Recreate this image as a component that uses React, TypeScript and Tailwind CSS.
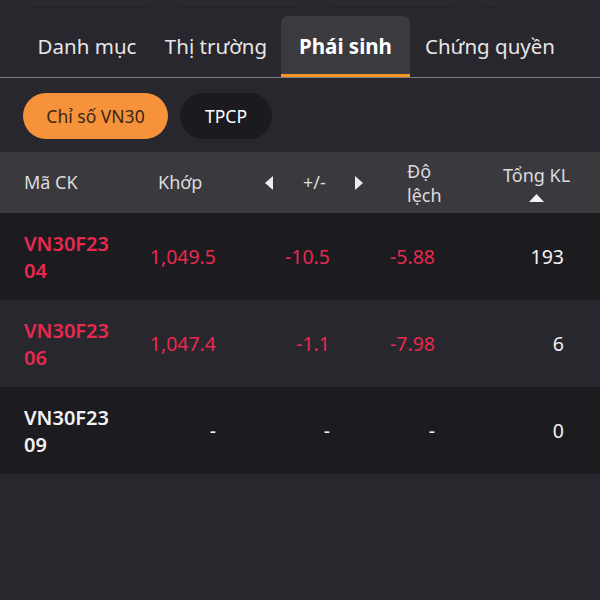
import React from "react";

const RED = "text-[#e8294f]";

type Row = { sym: [string, string]; price: string; chg: string; pct: string; vol: string; red: boolean; dark: boolean };

const rows: Row[] = [
  { sym: ["VN30F23", "04"], price: "1,049.5", chg: "-10.5", pct: "-5.88", vol: "193", red: true, dark: true },
  { sym: ["VN30F23", "06"], price: "1,047.4", chg: "-1.1", pct: "-7.98", vol: "6", red: true, dark: false },
  { sym: ["VN30F23", "09"], price: "-", chg: "-", pct: "-", vol: "0", red: false, dark: true },
];

export default function App() {
  return (
    <div
      className="w-[600px] h-[600px] bg-[#28272d] overflow-hidden text-white"
      style={{ fontFamily: '"Noto Sans", "Open Sans", sans-serif' }}
    >
      {/* top cropped strip */}
      <div className="h-[5px] flex pl-[27px] gap-[25px]">
        <div className="w-[125px] h-[4px] rounded-b-[6px] bg-[#2a2930] border-b border-[#302f35]" />
        <div className="w-[125px] h-[4px] rounded-b-[6px] bg-[#2a2930] border-b border-[#302f35]" />
        <div className="w-[128px] h-[4px] rounded-b-[6px] bg-[#2a2930] border-b border-[#302f35]" />
        <div className="w-[22px] h-[4px] rounded-b-[6px] bg-[#2a2930] border-b border-[#302f35]" />
      </div>

      {/* tabs */}
      <div className="mt-[11px] flex items-stretch h-[62px] border-b border-[#7d7c82] pl-[23px] text-[20.5px] text-[#e6e6e8]">
        <div className="w-[128px] flex items-center justify-center">Danh mục</div>
        <div className="w-[130px] flex items-center justify-center">Thị trường</div>
        <div className="w-[129px] flex items-center justify-center bg-[#3b3a3f] rounded-t-[7px] border-b-[3px] border-[#f29423] font-bold text-white pt-[3px]">
          Phái sinh
        </div>
        <div className="flex items-center pl-[15px]">Chứng quyền</div>
      </div>

      {/* pills */}
      <div className="flex gap-[12px] pl-[23px] mt-[15px] h-[46px]">
        <div className="w-[145px] rounded-full bg-[#f6923a] text-[#3a2616] text-[17.5px] flex items-center justify-center">
          Chỉ số VN30
        </div>
        <div className="w-[92px] rounded-full bg-[#1b1a1f] text-white text-[17.5px] flex items-center justify-center">
          TPCP
        </div>
      </div>

      {/* header */}
      <div className="mt-[13px] h-[61px] bg-[#3a393e] flex items-center text-[18px] text-[#dcdcde]">
        <div className="w-[158px] pl-[24px]">Mã CK</div>
        <div className="w-[107px]">Khớp</div>
        <div className="w-[142px] flex items-center">
          <svg width="8" height="14" viewBox="0 0 8 14" className="block">
            <path d="M8 0 L0 7 L8 14 Z" fill="#ececee" />
          </svg>
          <span className="ml-[30px]">+/-</span>
          <svg width="8" height="14" viewBox="0 0 8 14" className="block ml-[29px]">
            <path d="M0 0 L8 7 L0 14 Z" fill="#ececee" />
          </svg>
        </div>
        <div className="w-[96px] leading-[24px] flex flex-col">
          <span>Độ</span>
          <span>lệch</span>
        </div>
        <div className="flex flex-col items-center">
          <span className="leading-[24px]">Tổng KL</span>
          <svg width="15" height="8" viewBox="0 0 15 8" className="block mt-[7px]">
            <path d="M0 8 L7.5 0 L15 8 Z" fill="#f2f2f4" />
          </svg>
        </div>
      </div>

      {/* rows */}
      {rows.map((r, i) => {
        const c = r.red ? RED : "text-[#f2f2f4]";
        return (
          <div
            key={i}
            className={`h-[87px] flex items-center text-[19.5px] pt-[1px] ${r.dark ? "bg-[#1c1b1f]" : "bg-[#28272d]"}`}
          >
            <div className={`w-[140px] pl-[24px] font-semibold leading-[27px] text-[20px] ${c}`}>
              <div>{r.sym[0]}</div>
              <div>{r.sym[1]}</div>
            </div>
            <div className={`w-[76px] text-right ${c}`}>{r.price}</div>
            <div className={`w-[114px] text-right ${c}`}>{r.chg}</div>
            <div className={`w-[105px] text-right ${c}`}>{r.pct}</div>
            <div className="w-[129px] text-right text-[#f2f2f4]">{r.vol}</div>
          </div>
        );
      })}
    </div>
  );
}
